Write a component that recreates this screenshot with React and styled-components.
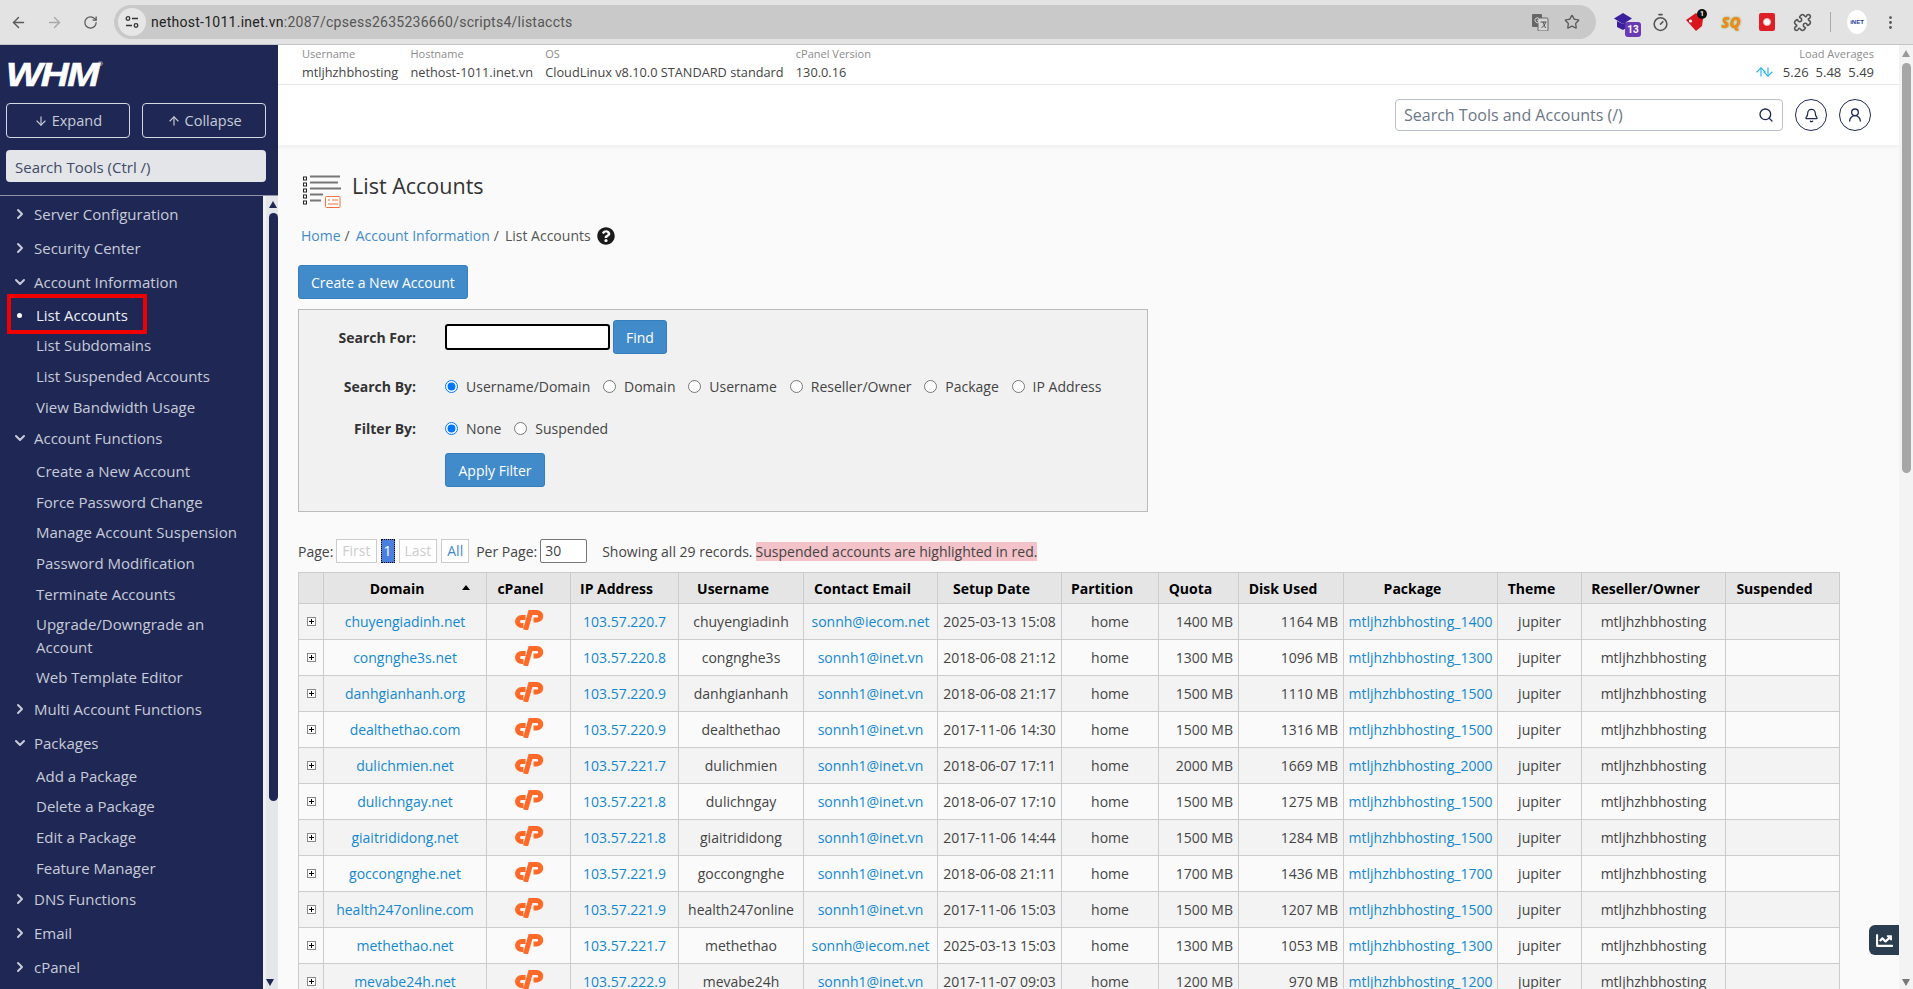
import React from "react";
import styled, { createGlobalStyle } from "styled-components";
import { ArrowLeft, ArrowRight, RotateCw, Star, Timer, Puzzle, EllipsisVertical, ArrowDown, ArrowUp, ChevronRight, ChevronDown, Search, Bell, UserRound } from "lucide-react";
import { FaQuestionCircle, FaChartLine } from "react-icons/fa";

const Global = createGlobalStyle`
  html, body { margin: 0; padding: 0; height: 100%; overflow: hidden; }
  body { font-family: "Open Sans", sans-serif; font-size: 14px; color: #333; background: #fafafa; }
  * { box-sizing: border-box; }
`;

const Page = styled.div`display:flex;flex-direction:column;width:1913px;height:989px;overflow:hidden;position:relative;`;
const ChromeBar = styled.div`height:45px;flex:none;background:#e3e3e3;border-bottom:1px solid #c4c4c4;display:flex;align-items:center;color:#5f6368;`;
const NavBtn = styled.span`width:36px;height:36px;display:flex;align-items:center;justify-content:center;color:${p=>p.$dim?"#a9a9a9":"#5a5a5a"};`;
const Omni = styled.div`margin-left:6px;width:1482px;height:34px;background:#c9c9c9;border-radius:17px;display:flex;align-items:center;padding:0 8px 0 4px;`;
const SiteChip = styled.span`width:28px;height:28px;border-radius:50%;background:#e6e6e6;display:flex;align-items:center;justify-content:center;flex:none;`;
const Url = styled.span`margin-left:5px;font-family:Roboto,sans-serif;font-size:14px;color:#555;flex:1;letter-spacing:.26px;white-space:nowrap;b{font-weight:400;color:#222;}`;
const OmniIcon = styled.span`display:flex;width:32px;justify-content:center;color:#5a5a5a;`;
const ExtRow = styled.div`display:flex;align-items:center;margin-left:11px;`;
const Ext = styled.span`width:35.5px;height:30px;display:flex;align-items:center;justify-content:center;position:relative;color:#555;`;
const ExtBadge = styled.span`position:absolute;left:18px;bottom:0;width:16px;height:15px;border-radius:3px;background:#6a3ab5;color:#fff;font:700 10px/15px Roboto,sans-serif;text-align:center;`;
const TagBadge = styled.span`position:absolute;left:19px;top:2px;width:10px;height:10px;border-radius:50%;background:#111;color:#fff;font:700 7px/10px Roboto,sans-serif;text-align:center;`;
const SqMark = styled.span`font:italic 800 15px "Open Sans",sans-serif;color:#f08a1c;text-shadow:0 0 2px #6fae3a;`;
const RedSquare = styled.span`width:16px;height:18px;border-radius:2px;background:#df1f26;display:flex;align-items:center;justify-content:center;&::after{content:"";width:6px;height:6px;border-radius:50%;background:#fff;border:1.5px solid #f5b5b5;}`;
const Sep = styled.span`width:1px;height:20px;background:#aaa;margin:0 16px 0 10px;`;
const Avatar = styled.span`width:20px;height:24px;border-radius:50%;background:#fff;color:#2a3f9c;font:700 6px/24px "Liberation Sans",sans-serif;text-align:center;margin-right:6px;`;

const Body = styled.div`flex:1;display:flex;min-height:0;`;
const Sidebar = styled.aside`width:278px;flex:none;background:#1f2855;display:flex;flex-direction:column;color:#c8cbd8;`;
const SideTop = styled.div`height:151px;flex:none;padding:16px 12px 0 6px;border-bottom:1px solid #8f93a8;`;
const LogoText = styled.div`height:27px;font:italic 900 34px/27px "Liberation Sans",sans-serif;color:#fff;letter-spacing:-1.5px;transform:scaleX(1.14);transform-origin:left;position:relative;width:84px;-webkit-text-stroke:.6px #fff;sup{position:absolute;right:-1px;top:0;font:400 6px "Liberation Sans",sans-serif;letter-spacing:0;-webkit-text-stroke:0;}`;
const BtnRow = styled.div`display:flex;gap:12.5px;margin-top:15px;`;
const OutlineBtn = styled.div`flex:1;height:35px;border:1px solid #d7d9e2;border-radius:4px;display:flex;align-items:center;justify-content:center;gap:4px;font-size:14.5px;color:#c8cbd8;`;
const SideSearch = styled.div`margin-top:12px;height:32px;background:#e3e5e9;border-radius:4px;color:#3f4a66;font-size:15px;line-height:34px;padding-left:9px;`;
const NavWrap = styled.div`flex:1;display:flex;min-height:0;`;
const Nav = styled.nav`flex:1;padding-top:2px;overflow:hidden;`;
const GroupRow = styled.div`height:34px;display:flex;align-items:center;padding:0 0 2px 12px;font-size:15px;gap:6px;white-space:nowrap;color:#c8cbd8;`;
const ItemRow = styled.div`min-height:30.6px;display:flex;align-items:center;padding:3.5px 20px 3.5px 36px;font-size:15px;line-height:23px;color:${p=>p.$active?"#eceef4":"#c8cbd8"};position:relative;&::before{content:"";display:${p=>p.$active?"block":"none"};position:absolute;left:17px;top:50%;margin-top:-2.5px;width:5px;height:5px;border-radius:50%;background:#fff;}`;
const RedBox = styled.span`position:absolute;left:7px;top:-6px;width:140px;height:40px;border:4px solid #f00000;pointer-events:none;`;
const SideTrack = styled.div`width:15px;flex:none;background:#e4e6ea;position:relative;padding:5px 3px 0 3px;border-left:3px solid #eef0f3;`;
const UpTri = styled.div`width:0;height:0;margin:0 auto;border-left:4.5px solid transparent;border-right:4.5px solid transparent;border-bottom:7px solid ${p=>p.$c};`;
const DownTri = styled.div`width:0;height:0;position:absolute;bottom:${p=>p.$b}px;left:${p=>p.$l}px;border-left:4.5px solid transparent;border-right:4.5px solid transparent;border-top:7px solid ${p=>p.$c};`;
const SideThumb = styled.div`width:9px;height:588px;background:#1f2855;border-radius:5px;margin:5px 0 0 0;`;

const Content = styled.div`flex:1;min-width:0;display:flex;flex-direction:column;`;
const StatusBar = styled.div`height:40px;flex:none;background:#fff;border-bottom:1px solid #e6e6e6;display:flex;padding:1px 25px 0 24px;gap:12.2px;`;
const Stat = styled.div`display:flex;flex-direction:column;white-space:nowrap;`;
const StatRight = styled(Stat)`margin-left:auto;align-items:flex-end;`;
const StatLabel = styled.span`font-size:11px;line-height:16px;color:#8b8b8b;`;
const StatValue = styled.span`font-size:12.75px;line-height:18px;margin-top:1px;color:#444;display:flex;align-items:center;`;
const LoadNum = styled.span`margin-left:${p=>p.$m}px;font-size:13px;`;
const LoadArrows = styled.span`display:flex;color:#29b6e8;svg{margin-right:-7px;}`;
const Header = styled.header`height:60px;flex:none;background:#fff;display:flex;align-items:center;justify-content:flex-end;padding:0 28px 0 0;box-shadow:0 2px 4px rgba(0,0,0,.05);position:relative;gap:12px;`;
const HeaderSearch = styled.div`width:388px;height:32px;border:1px solid #b9bfcc;border-radius:4px;display:flex;align-items:center;justify-content:space-between;padding:0 8px 0 8px;color:#6c7686;font-size:16px;margin-right:0;svg{color:#1f2855;}`;
const RoundBtn = styled.span`width:32px;height:32px;border-radius:50%;border:1px solid #1f2855;color:#1f2855;display:flex;align-items:center;justify-content:center;`;
const Main = styled.main`flex:1;min-height:0;overflow:hidden;background:#fafafa;padding:30px 0 0 20px;`;
const TitleRow = styled.div`display:flex;align-items:center;gap:11px;margin-left:5px;height:33px;`;
const Title = styled.h1`margin:-11px 0 0;font-size:21.5px;font-weight:400;color:#333;line-height:26px;`;
const Crumbs = styled.div`margin:18px 0 0 3px;height:20px;display:flex;align-items:center;line-height:20px;color:#555;svg{margin-left:6px;color:#1b1b1b;}`;
const CrumbLink = styled.a`color:#428bca;`;
const CrumbSep = styled.span`margin:0 6px 0 4px;`;
const Btn = styled.button`height:34px;padding:0 ${p=>p.$pad||12}px;background:#428bca;border:1px solid #357ebd;border-radius:3px;color:#fff;font:14px "Open Sans",sans-serif;display:block;`;
const CreateBtn = styled(Btn)`margin-top:19px;`;
const FormBox = styled.div`margin-top:10px;width:850px;height:203px;border:1px solid #bbb;background:#f1f1f1;padding-top:10px;`;
const FormRow = styled.div`display:flex;align-items:center;margin-top:${p=>p.$mt||0}px;min-height:20px;`;
const FormLabel = styled.span`width:117px;text-align:right;font-weight:700;margin-right:29px;flex:none;color:#333;`;
const TextInput = styled.input`width:165px;height:26px;border:2px solid #000;border-radius:3px;background:#fff;margin-right:3px;`;
const RadioGroup = styled.div`display:flex;gap:12.8px;`;
const RadioLabel = styled.label`display:flex;align-items:center;gap:8px;color:#444;input{margin:0;width:13px;height:13px;}`;
const Pager = styled.div`margin-top:27px;height:24px;display:flex;align-items:center;color:#444;white-space:nowrap;`;
const PageBox = styled.span`height:24px;line-height:22px;border:${p=>p.$cur?"1px dotted #000":"1px solid #ccc"};background:${p=>p.$cur?"#4a7fe0":"#fff"};color:${p=>p.$cur?"#fff":p.$dim?"#ccc":"#428bca"};padding:0 ${p=>p.$cur?2:5}px;margin-left:${p=>p.$ml}px;`;
const PerLabel = styled.span`margin-left:7px;`;
const PerInput = styled.span`width:47px;height:24px;border:1px solid #777;border-radius:2px;background:#fff;margin:0 15px 0 3px;padding-left:4px;line-height:22px;`;
const RedNote = styled.span`background:#f4c2c9;margin-left:3px;line-height:19px;`;
const Table = styled.table`margin-top:9px;width:1541px;table-layout:fixed;border-collapse:collapse;`;
const Col = styled.col`width:${p=>p.$w}px;`;
const Th = styled.th`height:31px;padding:0 18px 0 2px;background:#e5e5e5;border:1px solid #ccc;font-size:14px;font-weight:700;color:#000;white-space:nowrap;position:relative;`;
const SortArrow = styled.span`position:absolute;right:16px;top:12px;border-left:4px solid transparent;border-right:4px solid transparent;border-bottom:5px solid #000;`;
const Tr = styled.tr`background:${p=>p.$odd?"#f3f3f3":"#fafafa"};`;
const Td = styled.td`height:36px;padding:0 ${p=>p.$right?"5px":"2px"} 0 2px;border:1px solid #ccc;text-align:${p=>p.$right?"right":"center"};white-space:nowrap;color:#444;overflow:hidden;`;
const CellLink = styled.a`color:#1288d0;`;
const ChatBtn = styled.div`position:absolute;left:1869px;top:925px;width:30px;height:30px;background:#2b3e50;border-radius:6px 0 0 6px;color:#fff;display:flex;align-items:center;justify-content:center;`;
const PageTrack = styled.div`width:14px;flex:none;background:#f3f3f3;position:relative;padding-top:5px;`;
const PageThumb = styled.div`width:9px;height:410px;margin:6px 0 0 3px;background:#a6a6a6;border-radius:5px;`;

const Plus = () => (
  <svg width="9" height="9" viewBox="0 0 9 9" style={{display:"block",margin:"0 auto"}}>
    <rect x=".5" y=".5" width="8" height="8" fill="#fff" stroke="#888"/>
    <path d="M2 4.5h5M4.5 2v5" stroke="#000"/>
  </svg>
);
const CpLogo = () => (
  <svg width="30" height="20" viewBox="0 0 30 20" style={{display:"block",margin:"-3px auto 0"}}>
    <path d="M11.600 7.500H7.500a4 4 0 0 0 0 8H9.500" fill="none" stroke="#ff6a28" strokeWidth="5"/>
    <path d="M11.500 20 16.500 2.500H23a3.700 3.700 0 0 1 0 7.400H19.500" fill="none" stroke="#ff6a28" strokeWidth="5"/>
  </svg>
);
const ListIcon = () => (
  <svg width="38" height="33" viewBox="0 0 38 33">
    <g fill="#fff" stroke="#222" strokeWidth="1">
      {[2,8,14,20,26].map(y=><rect key={y} x=".5" y={y} width="3" height="3"/>)}
    </g>
    <g stroke="#777" strokeWidth="2">
      <path d="M7 1.5h30M7 7.5h28M7 13.500h31M7 19.500h13M7 25.500h11"/>
    </g>
    <rect x="22.500" y="21.500" width="14.500" height="11" rx="1" fill="#fff" stroke="#f4703a"/>
    <path d="M25 25h2M29 25h6M25 29h10" stroke="#f4a080" strokeWidth="1.6"/>
  </svg>
);
const SiteIcon = () => (
  <svg width="14" height="14" viewBox="0 0 14 14" fill="none" stroke="#333" strokeWidth="1.3">
    <circle cx="3" cy="3.500" r="1.800"/><path d="M7 3.500h6M1 10.500h6"/><circle cx="11" cy="10.500" r="1.800"/>
  </svg>
);
const TranslateIcon = () => (
  <svg width="17" height="17" viewBox="0 0 17 17">
    <rect x="0" y="0" width="10" height="13" rx="1" fill="#666"/>
    <rect x="6" y="4" width="10" height="13" rx="1" fill="#d5d5d5" stroke="#666"/>
    <path d="M8.500 8h6M11 8l2.500 6M13.500 8c-.5 3-2 4.500-4 5.500" stroke="#555" fill="none" strokeWidth="1"/>
    <path d="M7 4.500A2.400 2.400 0 1 0 7 8V6.300H5" stroke="#ddd" fill="none"/>
  </svg>
);

const rows = [
  ["chuyengiadinh.net","103.57.220.7","chuyengiadinh","sonnh@iecom.net","2025-03-13 15:08",1400,1164],
  ["congnghe3s.net","103.57.220.8","congnghe3s","sonnh1@inet.vn","2018-06-08 21:12",1300,1096],
  ["danhgianhanh.org","103.57.220.9","danhgianhanh","sonnh1@inet.vn","2018-06-08 21:17",1500,1110],
  ["dealthethao.com","103.57.220.9","dealthethao","sonnh1@inet.vn","2017-11-06 14:30",1500,1316],
  ["dulichmien.net","103.57.221.7","dulichmien","sonnh1@inet.vn","2018-06-07 17:11",2000,1669],
  ["dulichngay.net","103.57.221.8","dulichngay","sonnh1@inet.vn","2018-06-07 17:10",1500,1275],
  ["giaitrididong.net","103.57.221.8","giaitrididong","sonnh1@inet.vn","2017-11-06 14:44",1500,1284],
  ["goccongnghe.net","103.57.221.9","goccongnghe","sonnh1@inet.vn","2018-06-08 21:11",1700,1436],
  ["health247online.com","103.57.221.9","health247online","sonnh1@inet.vn","2017-11-06 15:03",1500,1207],
  ["methethao.net","103.57.221.7","methethao","sonnh@iecom.net","2025-03-13 15:03",1300,1053],
  ["mevabe24h.net","103.57.222.9","mevabe24h","sonnh1@inet.vn","2017-11-07 09:03",1200,970],
];
const widths = [25,163,84,108,125,134,124,97,80,105,154,84,144,114];
const heads = ["","Domain","cPanel","IP Address","Username","Contact Email","Setup Date","Partition","Quota","Disk Used","Package","Theme","Reseller/Owner","Suspended"];

const nav = [
  ["g","Server Configuration"],["g","Security Center"],["o","Account Information"],["a","List Accounts"],["i","List Subdomains"],["i","List Suspended Accounts"],["i","View Bandwidth Usage"],
  ["o","Account Functions"],["i","Create a New Account"],["i","Force Password Change"],["i","Manage Account Suspension"],["i","Password Modification"],["i","Terminate Accounts"],["i","Upgrade/Downgrade an Account"],["i","Web Template Editor"],
  ["g","Multi Account Functions"],["o","Packages"],["i","Add a Package"],["i","Delete a Package"],["i","Edit a Package"],["i","Feature Manager"],["g","DNS Functions"],["g","Email"],["g","cPanel"],
];

export default function App() {
  return (
    <Page>
      <Global />
      <ChromeBar>
        <NavBtn><ArrowLeft size={17} /></NavBtn>
        <NavBtn $dim><ArrowRight size={17} /></NavBtn>
        <NavBtn><RotateCw size={15} /></NavBtn>
        <Omni>
          <SiteChip><SiteIcon /></SiteChip>
          <Url><b>nethost-1011.inet.vn</b>:2087/cpsess2635236660/scripts4/listaccts</Url>
          <OmniIcon><TranslateIcon /></OmniIcon>
          <OmniIcon><Star size={16} /></OmniIcon>
        </Omni>
        <ExtRow>
          <Ext>
            <svg width="22" height="20" viewBox="0 0 22 20"><path d="M9 1l9 5.500-9 5.500-9-5.500z" fill="#3b1f9e"/><path d="M3 9v6l6 3 3-2v-6l-3 2z" fill="#3b1f9e"/></svg>
            <ExtBadge>13</ExtBadge>
          </Ext>
          <Ext><Timer size={19} /></Ext>
          <Ext>
            <svg width="22" height="20" viewBox="0 0 22 20"><path d="M1 8l10-7 7 6-1 7-6 5z" fill="#d9161d"/><circle cx="5.500" cy="9" r="1.600" fill="#fff"/></svg>
            <TagBadge>1</TagBadge>
          </Ext>
          <Ext><SqMark>SQ</SqMark></Ext>
          <Ext><RedSquare /></Ext>
          <Ext><Puzzle size={19} /></Ext>
          <Sep />
          <Avatar>iNET</Avatar>
          <Ext><EllipsisVertical size={17} /></Ext>
        </ExtRow>
      </ChromeBar>
      <Body>
        <Sidebar>
          <SideTop>
            <LogoText>WHM<sup>®</sup></LogoText>
            <BtnRow>
              <OutlineBtn><ArrowDown size={14} />Expand</OutlineBtn>
              <OutlineBtn><ArrowUp size={14} />Collapse</OutlineBtn>
            </BtnRow>
            <SideSearch>Search Tools (Ctrl /)</SideSearch>
          </SideTop>
          <NavWrap>
            <Nav>
              {nav.map(([k, t]) =>
                k === "g" || k === "o" ? (
                  <GroupRow key={t}>
                    {k === "g" ? <ChevronRight size={16} strokeWidth={3} /> : <ChevronDown size={16} strokeWidth={3} />}
                    {t}
                  </GroupRow>
                ) : (
                  <ItemRow key={t} $active={k === "a"}>
                    {t}
                    {k === "a" && <RedBox />}
                  </ItemRow>
                )
              )}
            </Nav>
            <SideTrack>
              <UpTri $c="#1f2855" />
              <SideThumb />
              <DownTri $c="#1f2855" $b={3} $l={0} />
            </SideTrack>
          </NavWrap>
        </Sidebar>
        <Content>
          <StatusBar>
            <Stat><StatLabel>Username</StatLabel><StatValue>mtljhzhbhosting</StatValue></Stat>
            <Stat><StatLabel>Hostname</StatLabel><StatValue>nethost-1011.inet.vn</StatValue></Stat>
            <Stat><StatLabel>OS</StatLabel><StatValue>CloudLinux v8.10.0 STANDARD standard</StatValue></Stat>
            <Stat><StatLabel>cPanel Version</StatLabel><StatValue>130.0.16</StatValue></Stat>
            <StatRight>
              <StatLabel>Load Averages</StatLabel>
              <StatValue>
                <LoadArrows><ArrowUp size={14} /><ArrowDown size={14} /></LoadArrows>
                <LoadNum $m={15}>5.26</LoadNum><LoadNum $m={7}>5.48</LoadNum><LoadNum $m={7}>5.49</LoadNum>
              </StatValue>
            </StatRight>
          </StatusBar>
          <Header>
            <HeaderSearch>Search Tools and Accounts (/)<Search size={16} /></HeaderSearch>
            <RoundBtn><Bell size={15} /></RoundBtn>
            <RoundBtn><UserRound size={16} /></RoundBtn>
          </Header>
          <Main>
            <TitleRow><ListIcon /><Title>List Accounts</Title></TitleRow>
            <Crumbs>
              <CrumbLink>Home</CrumbLink><CrumbSep>/</CrumbSep>
              <CrumbLink>Account Information</CrumbLink><CrumbSep>/</CrumbSep>
              List Accounts<FaQuestionCircle size={18} />
            </Crumbs>
            <CreateBtn>Create a New Account</CreateBtn>
            <FormBox>
              <FormRow>
                <FormLabel>Search For:</FormLabel><TextInput /><Btn $pad={12}>Find</Btn>
              </FormRow>
              <FormRow $mt={22}>
                <FormLabel>Search By:</FormLabel>
                <RadioGroup>
                  {["Username/Domain","Domain","Username","Reseller/Owner","Package","IP Address"].map((t,i)=>(
                    <RadioLabel key={t}><input type="radio" name="by" defaultChecked={i===0} />{t}</RadioLabel>
                  ))}
                </RadioGroup>
              </FormRow>
              <FormRow $mt={22}>
                <FormLabel>Filter By:</FormLabel>
                <RadioGroup>
                  {["None","Suspended"].map((t,i)=>(
                    <RadioLabel key={t}><input type="radio" name="filter" defaultChecked={i===0} />{t}</RadioLabel>
                  ))}
                </RadioGroup>
              </FormRow>
              <FormRow $mt={15}>
                <FormLabel />
                <Btn $pad={12.5}>Apply Filter</Btn>
              </FormRow>
            </FormBox>
            <Pager>
              Page:
              <PageBox $dim $ml={3}>First</PageBox>
              <PageBox $cur $ml={4}>1</PageBox>
              <PageBox $dim $ml={4}>Last</PageBox>
              <PageBox $ml={4}>All</PageBox>
              <PerLabel>Per Page:</PerLabel>
              <PerInput>30</PerInput>
              Showing all 29 records.
              <RedNote>Suspended accounts are highlighted in red.</RedNote>
            </Pager>
            <Table>
              <colgroup>{widths.map((w,i)=><Col key={i} $w={w} />)}</colgroup>
              <thead>
                <tr>{heads.map((h,i)=>(
                  <Th key={i}>{h}{i===1 && <SortArrow />}</Th>
                ))}</tr>
              </thead>
              <tbody>
                {rows.map((r,i)=>(
                  <Tr key={r[0]} $odd={i%2===0}>
                    <Td><Plus /></Td>
                    <Td><CellLink>{r[0]}</CellLink></Td>
                    <Td><CpLogo /></Td>
                    <Td><CellLink>{r[1]}</CellLink></Td>
                    <Td>{r[2]}</Td>
                    <Td><CellLink>{r[3]}</CellLink></Td>
                    <Td>{r[4]}</Td>
                    <Td>home</Td>
                    <Td $right>{r[5]} MB</Td>
                    <Td $right>{r[6]} MB</Td>
                    <Td><CellLink>mtljhzhbhosting_{r[5]}</CellLink></Td>
                    <Td>jupiter</Td>
                    <Td>mtljhzhbhosting</Td>
                    <Td />
                  </Tr>
                ))}
              </tbody>
            </Table>
          </Main>
        </Content>
        <PageTrack>
          <UpTri $c="#999" />
          <PageThumb />
          <DownTri $c="#777" $b={3} $l={3} />
        </PageTrack>
      </Body>
      <ChatBtn><FaChartLine size={17} /></ChatBtn>
    </Page>
  );
}
